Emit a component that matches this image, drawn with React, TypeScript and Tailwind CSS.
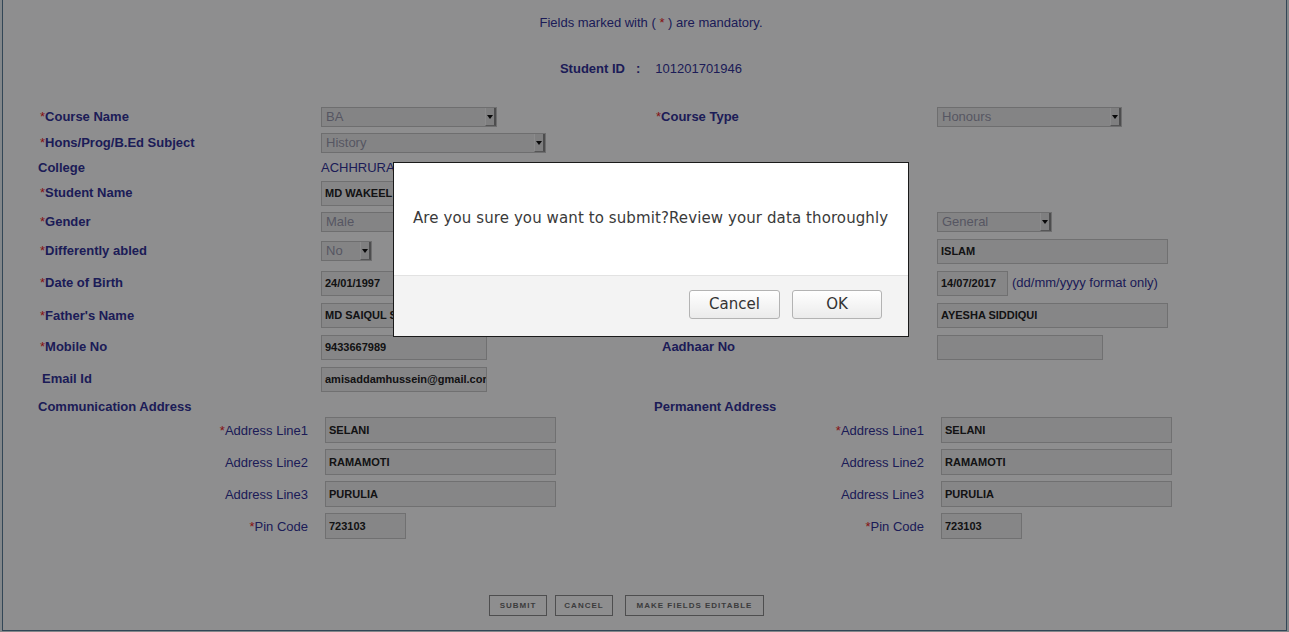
import React from 'react';

const navy = 'text-[#333399]';

function Star() {
    return <span className="font-normal text-[#ee2222]">*</span>;
}

function Label({ text, star = true, indent = '' }: { text: string; star?: boolean; indent?: string }) {
    return (
        <div className={`text-[13px] font-bold leading-[16px] ${navy} ${indent}`}>
            {star && <Star />}
            {text}
        </div>
    );
}

function Select({ value, width }: { value: string; width: string }) {
    return (
        <div className={`flex h-[20px] items-stretch border border-[#c4c4c4] bg-[#ececec] ${width}`}>
            <div className="flex-1 truncate pl-[4px] text-[13px] leading-[18px] text-[#9a9aae]">{value}</div>
            <div className="flex w-[11px] items-center justify-center border-l border-l-[#f8f8f8] border-r-2 border-r-[#8a8a8a] border-b border-b-[#9a9a9a] bg-[#e2e2e2]">
                <svg width="6" height="4" viewBox="0 0 6 4">
                    <path d="M0 0 L6 0 L3 4 Z" fill="#111" />
                </svg>
            </div>
        </div>
    );
}

function Input({ value = '', width, h = 'h-[25px] leading-[23px]' }: { value?: string; width: string; h?: string }) {
    return (
        <div className={`overflow-hidden whitespace-nowrap border border-[#c8c8c8] bg-[#efefef] pl-[3px] text-[11px] font-bold text-[#222] ${h} ${width}`}>
            {value}
        </div>
    );
}

function Row({ h, children }: { h: string; children: React.ReactNode }) {
    return <div className={`grid grid-cols-[283px_335px_281px_1fr] items-center ${h}`}>{children}</div>;
}

function AddrRow({ label, star, value, width }: { label: string; star?: boolean; value: string; width: string }) {
    return (
        <div className="grid h-[26px] grid-cols-[270px_17px_1fr] items-center">
            <div className={`pt-[1px] text-right text-[13px] leading-[16px] ${navy}`}>
                {star && <Star />}
                {label}
            </div>
            <div />
            <Input value={value} width={width} h="h-[26px] leading-[24px]" />
        </div>
    );
}

function AddressBlock({ title, first }: { title: string; first?: boolean }) {
    return (
        <div className={first ? 'w-[616px]' : 'flex-1'}>
            <div className={`h-[20px] text-[13px] font-bold leading-[20px] ${navy}`}>{title}</div>
            <div className="flex flex-col gap-[6px]">
                <AddrRow label="Address Line1" star value="SELANI" width="w-[231px]" />
                <AddrRow label="Address Line2" value="RAMAMOTI" width="w-[231px]" />
                <AddrRow label="Address Line3" value="PURULIA" width="w-[231px]" />
                <AddrRow label="Pin Code" star value="723103" width="w-[81px]" />
            </div>
        </div>
    );
}

function PlainButton({ text, width, margin }: { text: string; width: string; margin: string }) {
    return (
        <div className={`flex h-[21px] items-center justify-center border border-[#8c8c8c] text-[8px] font-bold tracking-[1px] text-[#6c6c6c] ${width} ${margin}`}>
            {text}
        </div>
    );
}

function App() {
    return (
        <div className="h-[632px] overflow-hidden bg-[#e9f0f4] font-['Liberation_Sans',Arial,sans-serif]">
            <div className="ml-[2px] h-[631px] w-[1285px] border-x border-b border-[#5a7d98] bg-[#fdfdfe]">
                <div className={`pl-[13px] pt-[15px] text-center text-[13px] leading-[16px] ${navy}`}>
                    Fields marked with ( <span className="text-[#ee2222]">*</span> ) are mandatory.
                </div>
                <div className={`mt-[30px] flex h-[16px] justify-center pl-[13px] text-[13px] leading-[16px] ${navy}`}>
                    <span className="font-bold">Student ID</span>
                    <span className="ml-[11px] font-bold">:</span>
                    <span className="ml-[15px]">101201701946</span>
                </div>

                <div className="mt-[27px] pl-[35px]">
                    <Row h="h-[26px]">
                        <Label text="Course Name" indent="pl-[2px]" />
                        <Select value="BA" width="w-[176px]" />
                        <Label text="Course Type" />
                        <Select value="Honours" width="w-[185px]" />
                    </Row>
                    <Row h="h-[26px]">
                        <Label text="Hons/Prog/B.Ed Subject" indent="pl-[2px]" />
                        <Select value="History" width="w-[225px]" />
                        <div />
                        <div />
                    </Row>
                    <Row h="h-[22px]">
                        <Label text="College" star={false} indent="pt-[2px]" />
                        <div className={`pt-[2px] text-[13px] leading-[16px] ${navy} whitespace-nowrap`}>ACHHRURAM MEMORIAL COLLEGE</div>
                        <div />
                        <div />
                    </Row>
                    <Row h="h-[30px]">
                        <Label text="Student Name" indent="pl-[2px]" />
                        <Input value="MD WAKEEL SAIQUL" width="w-[231px]" />
                        <div />
                        <div />
                    </Row>
                    <Row h="h-[28px]">
                        <Label text="Gender" indent="pl-[2px]" />
                        <Select value="Male" width="w-[115px]" />
                        <Label text="Category" />
                        <Select value="General" width="w-[115px]" />
                    </Row>
                    <Row h="h-[30px]">
                        <Label text="Differently abled" indent="pl-[2px]" />
                        <Select value="No" width="w-[51px]" />
                        <Label text="Religion" />
                        <Input value="ISLAM" width="w-[231px]" />
                    </Row>
                    <Row h="h-[34px]">
                        <Label text="Date of Birth" indent="pl-[2px]" />
                        <Input value="24/01/1997" width="w-[231px]" />
                        <Label text="Date of Admission" />
                        <div className="flex items-center">
                            <Input value="14/07/2017" width="w-[71px]" />
                            <span className={`ml-[4px] text-[13px] leading-[16px] ${navy}`}>(dd/mm/yyyy format only)</span>
                        </div>
                    </Row>
                    <Row h="h-[31px]">
                        <Label text="Father's Name" indent="pl-[2px]" />
                        <Input value="MD SAIQUL SIDDIQUI" width="w-[231px]" />
                        <Label text="Mother's Name" />
                        <Input value="AYESHA SIDDIQUI" width="w-[231px]" />
                    </Row>
                    <Row h="h-[32px]">
                        <Label text="Mobile No" indent="pl-[2px]" />
                        <Input value="9433667989" width="w-[166px]" />
                        <Label text="Aadhaar No" star={false} indent="pl-[6px]" />
                        <Input width="w-[166px]" />
                    </Row>
                    <Row h="h-[32px]">
                        <Label text="Email Id" star={false} indent="pl-[4px]" />
                        <Input value="amisaddamhussein@gmail.com" width="w-[166px]" />
                        <div />
                        <div />
                    </Row>

                    <div className="mt-[2px] flex">
                        <AddressBlock title="Communication Address" first />
                        <AddressBlock title="Permanent Address" />
                    </div>
                </div>

                <div className="mt-[56px] flex pl-[486px]">
                    <PlainButton text="SUBMIT" width="w-[58px]" margin="" />
                    <PlainButton text="CANCEL" width="w-[58px]" margin="ml-[8px]" />
                    <PlainButton text="MAKE FIELDS EDITABLE" width="w-[139px]" margin="ml-[12px]" />
                </div>
            </div>

            {/* overlay + confirm dialog */}
            <div className="fixed inset-0 z-10 bg-[rgba(0,0,2,0.44)]" />
            <div className="fixed left-[393px] top-[162px] z-20 w-[516px] border border-[#1a1a1a] bg-white font-['DejaVu_Sans',sans-serif]">
                <div className="flex h-[112px] items-center pb-[1px] pl-[19px] text-[15px] tracking-[0.1px] text-[#3a3a3a]">
                    Are you sure you want to submit?Review your data thoroughly
                </div>
                <div className="flex h-[61px] items-center justify-end gap-[12px] border-t border-[#e2e2e2] bg-[#f3f3f3] pb-[4px] pr-[26px]">
                    <button className="h-[29px] w-[91px] rounded-[3px] border border-[#b3b3b3] bg-gradient-to-b from-white to-[#ebebeb] text-[15px] text-[#333]">
                        Cancel
                    </button>
                    <button className="h-[29px] w-[90px] rounded-[3px] border border-[#b3b3b3] bg-gradient-to-b from-white to-[#ebebeb] text-[15px] text-[#333]">
                        OK
                    </button>
                </div>
            </div>
        </div>
    );
}

export default App;
